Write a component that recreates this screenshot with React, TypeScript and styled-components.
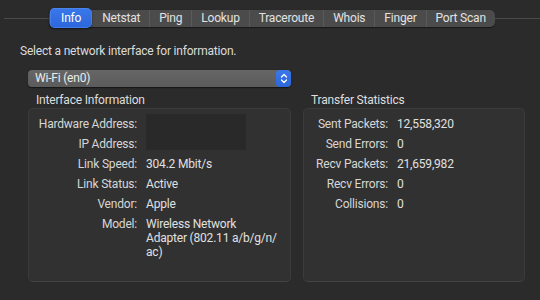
import * as React from 'react';
import styled, { createGlobalStyle } from 'styled-components';

const tabs = ['Info', 'Netstat', 'Ping', 'Lookup', 'Traceroute', 'Whois', 'Finger', 'Port Scan'];

const interfaceRows: [string, string][] = [
  ['Link Speed:', '304.2 Mbit/s'],
  ['Link Status:', 'Active'],
  ['Vendor:', 'Apple'],
  ['Model:', 'Wireless Network Adapter (802.11 a/b/g/n/\u200Bac)'],
];

const transferRows: [string, string][] = [
  ['Sent Packets:', '12,558,320'],
  ['Send Errors:', '0'],
  ['Recv Packets:', '21,659,982'],
  ['Recv Errors:', '0'],
  ['Collisions:', '0'],
];

export default function App() {
  return (
    <>
      <GlobalStyle />
      <Window>
        <TabRow>
          <TabStrip>
            {tabs.map((t, i) => (
              <Tab key={t} $active={i === 0} $divider={i > 1}>
                {t}
              </Tab>
            ))}
          </TabStrip>
        </TabRow>

        <Prompt>Select a network interface for information.</Prompt>

        <Popup>
          <PopupLabel>Wi-Fi (en0)</PopupLabel>
          <Stepper>
            <svg width="8" height="11" viewBox="0 0 8 11" fill="none">
              <path d="M1.5 4 L4 1.5 L6.5 4" stroke="#fff" strokeWidth="1.3" strokeLinecap="round" strokeLinejoin="round" />
              <path d="M1.5 7 L4 9.5 L6.5 7" stroke="#fff" strokeWidth="1.3" strokeLinecap="round" strokeLinejoin="round" />
            </svg>
          </Stepper>
        </Popup>

        <Groups>
          <Group $width={263}>
            <GroupTitle>Interface Information</GroupTitle>
            <Box>
              <InfoGrid $labelWidth={109} $valueWidth={132}>
                <Label>Hardware Address:</Label>
                <Redacted />
                <Label>IP Address:</Label>
                {interfaceRows.map(([k, v]) => (
                  <React.Fragment key={k}>
                    <Label>{k}</Label>
                    <Value>{v}</Value>
                  </React.Fragment>
                ))}
              </InfoGrid>
            </Box>
          </Group>
          <Group $width={222}>
            <GroupTitle>Transfer Statistics</GroupTitle>
            <Box>
              <InfoGrid $labelWidth={85} $valueWidth={110}>
                {transferRows.map(([k, v]) => (
                  <React.Fragment key={k}>
                    <Label>{k}</Label>
                    <Value>{v}</Value>
                  </React.Fragment>
                ))}
              </InfoGrid>
            </Box>
          </Group>
        </Groups>
      </Window>
    </>
  );
}

const GlobalStyle = createGlobalStyle`
  * {
    margin: 0;
    padding: 0;
    box-sizing: border-box;
  }
  body {
    background: #2b2b2b;
    font-family: Roboto, "Liberation Sans", sans-serif;
    color: #dcdcdc;
    -webkit-font-smoothing: antialiased;
  }
`;

const Window = styled.div`
  width: 540px;
  height: 300px;
  padding-top: 8px;
  background: #2b2b2b;
  font-size: 12px;
  letter-spacing: -0.2px;
`;

const TabRow = styled.div`
  display: flex;
  align-items: center;
  justify-content: center;
  padding-left: 4px;
  height: 20px;

  &::before,
  &::after {
    content: '';
    flex: 1;
    height: 1px;
    background: #4a4a4a;
  }
`;

const TabStrip = styled.div`
  display: flex;
  align-items: center;
  height: 17px;
  background: #4b4b4b;
  border-radius: 5px;
  box-shadow: 0 0.5px 1px rgba(0, 0, 0, 0.4);
`;

const Tab = styled.div<{ $active?: boolean; $divider?: boolean }>`
  position: relative;
  height: ${(p) => (p.$active ? '20px' : '17px')};
  line-height: ${(p) => (p.$active ? '20px' : '17px')};
  padding: 0 ${(p) => (p.$active ? '11px' : '9px')};
  border-radius: 5px;
  color: ${(p) => (p.$active ? '#ffffff' : '#e2e2e2')};
  background: ${(p) => (p.$active ? 'linear-gradient(#3a78ea, #2c66dc)' : 'transparent')};
  box-shadow: ${(p) => (p.$active ? 'inset 0 0 0 0.5px #5a8ff0, 0 1px 2px rgba(0,0,0,0.5)' : 'none')};
  border-left: ${(p) => (p.$divider ? '1px solid #5a5a5a' : '1px solid transparent')};
  border-top-left-radius: ${(p) => (p.$divider ? '0' : '5px')};
  border-bottom-left-radius: ${(p) => (p.$divider ? '0' : '5px')};
  background-clip: padding-box;
  white-space: nowrap;
`;

const Prompt = styled.div`
  margin: 15px 0 0 20px;
  line-height: 16px;
`;

const Popup = styled.div`
  display: flex;
  align-items: stretch;
  width: 263px;
  height: 17px;
  margin: 11px 0 0 28px;
  border-radius: 4px;
  background: linear-gradient(#666666, #5b5b5b);
  box-shadow: 0 0.5px 1px rgba(0, 0, 0, 0.5);
  overflow: hidden;
`;

const PopupLabel = styled.div`
  flex: 1;
  padding-left: 7px;
  line-height: 17px;
  color: #ececec;
`;

const Stepper = styled.div`
  width: 15px;
  display: flex;
  align-items: center;
  justify-content: center;
  background: linear-gradient(#3a78ea, #2c66dc);
  border-radius: 4px;
`;

const Groups = styled.div`
  display: flex;
  gap: 12px;
  margin: 6px 0 0 28px;
`;

const Group = styled.div<{ $width: number }>`
  width: ${(p) => p.$width}px;
  display: flex;
  flex-direction: column;
`;

const GroupTitle = styled.div`
  padding-left: 8px;
  line-height: 14px;
  height: 15px;
  color: #dedede;
`;

const Box = styled.div`
  height: 174px;
  background: #313131;
  border: 1px solid #3b3b3b;
  border-bottom-color: #444444;
  border-radius: 5px;
  padding-top: 8px;
`;

const InfoGrid = styled.div<{ $labelWidth: number; $valueWidth: number }>`
  display: grid;
  grid-template-columns: ${(p) => p.$labelWidth - 1}px ${(p) => p.$valueWidth}px;
  column-gap: 9px;
  row-gap: 6px;
  line-height: 14px;
`;

const Label = styled.div`
  text-align: right;
  white-space: nowrap;
  color: #d6d6d6;
`;

const Value = styled.div`
  color: #e0e0e0;
`;

const Redacted = styled.div`
  grid-row: span 2;
  width: 100px;
  height: 36px;
  margin-top: -3px;
  background: #292929;
`;
